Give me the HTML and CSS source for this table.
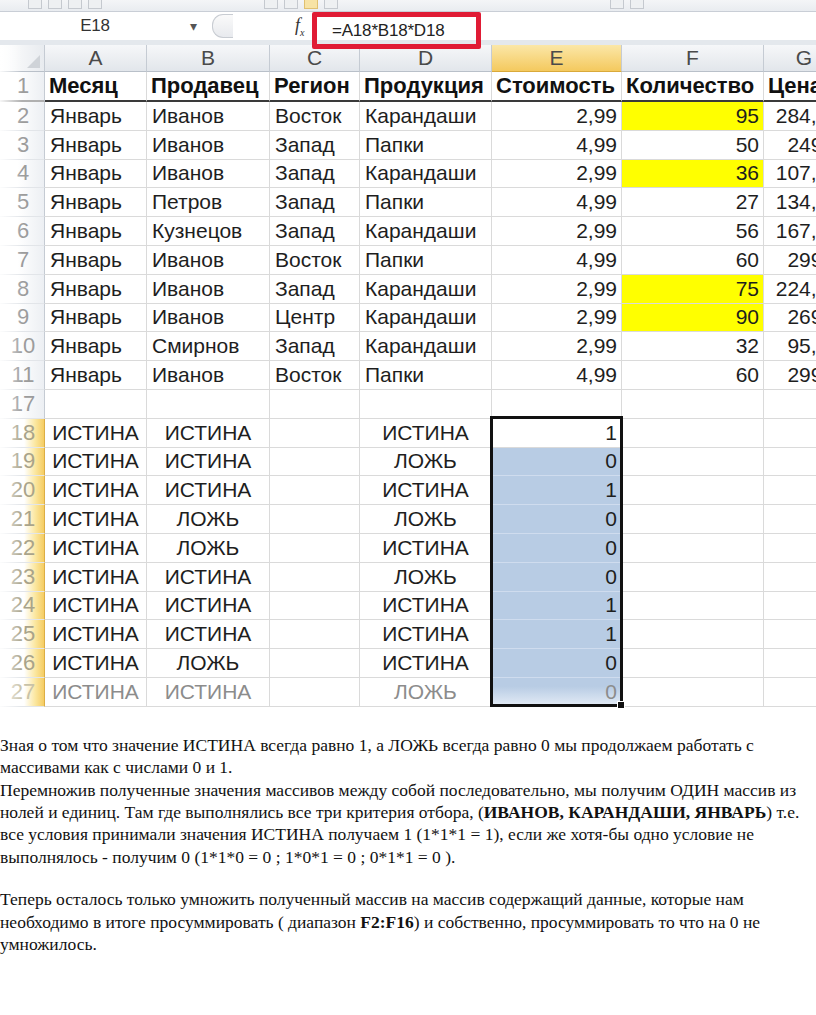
FILE: index.html
```html
<!DOCTYPE html>
<html lang="ru">
<head>
<meta charset="utf-8">
<title>Excel</title>
<link rel="stylesheet" href="styles.css">
</head>
<body>
<div class="page">
  <div class="toolbar">
    <span class="tb tb1"></span><span class="tb tb2"></span><span class="tb tb3"></span><span class="tb tb4"></span>
    <span class="tb-gap"></span>
    <span class="tb tb5"></span><span class="tb tb6"></span><span class="tb tb7 hl"></span><span class="tb tb8"></span>
    <span class="tb-gap2"></span>
    <span class="tb tb9"></span><span class="tb tb10"></span>
  </div>
  <div class="formula-bar">
    <div class="namebox">E18</div>
    <div class="dd">▾</div>
    <div class="pill"></div>
    <div class="fx">f<sub>x</sub></div>
    <div class="formula">=A18*B18*D18</div>
  </div>

  <div class="sheet">
    <div class="corner"><span class="tri"></span></div>
    <div class="ch">A</div><div class="ch">B</div><div class="ch">C</div><div class="ch">D</div><div class="ch act">E</div><div class="ch">F</div><div class="ch">G</div>

    <div class="rh h1">1</div><div class="c b h1">Месяц</div><div class="c b h1">Продавец</div><div class="c b h1">Регион</div><div class="c b h1">Продукция</div><div class="c b h1">Стоимость</div><div class="c b h1">Количество</div><div class="c b h1">Цена</div>

    <div class="rh">2</div><div class="c">Январь</div><div class="c">Иванов</div><div class="c">Восток</div><div class="c">Карандаши</div><div class="c r">2,99</div><div class="c r y">95</div><div class="c r">284,05</div>
    <div class="rh">3</div><div class="c">Январь</div><div class="c">Иванов</div><div class="c">Запад</div><div class="c">Папки</div><div class="c r">4,99</div><div class="c r">50</div><div class="c r">249,5</div>
    <div class="rh">4</div><div class="c">Январь</div><div class="c">Иванов</div><div class="c">Запад</div><div class="c">Карандаши</div><div class="c r">2,99</div><div class="c r y">36</div><div class="c r">107,64</div>
    <div class="rh">5</div><div class="c">Январь</div><div class="c">Петров</div><div class="c">Запад</div><div class="c">Папки</div><div class="c r">4,99</div><div class="c r">27</div><div class="c r">134,73</div>
    <div class="rh">6</div><div class="c">Январь</div><div class="c">Кузнецов</div><div class="c">Запад</div><div class="c">Карандаши</div><div class="c r">2,99</div><div class="c r">56</div><div class="c r">167,44</div>
    <div class="rh">7</div><div class="c">Январь</div><div class="c">Иванов</div><div class="c">Восток</div><div class="c">Папки</div><div class="c r">4,99</div><div class="c r">60</div><div class="c r">299,4</div>
    <div class="rh">8</div><div class="c">Январь</div><div class="c">Иванов</div><div class="c">Запад</div><div class="c">Карандаши</div><div class="c r">2,99</div><div class="c r y">75</div><div class="c r">224,25</div>
    <div class="rh">9</div><div class="c">Январь</div><div class="c">Иванов</div><div class="c">Центр</div><div class="c">Карандаши</div><div class="c r">2,99</div><div class="c r y">90</div><div class="c r">269,1</div>
    <div class="rh">10</div><div class="c">Январь</div><div class="c">Смирнов</div><div class="c">Запад</div><div class="c">Карандаши</div><div class="c r">2,99</div><div class="c r">32</div><div class="c r">95,68</div>
    <div class="rh">11</div><div class="c">Январь</div><div class="c">Иванов</div><div class="c">Восток</div><div class="c">Папки</div><div class="c r">4,99</div><div class="c r">60</div><div class="c r">299,4</div>
    <div class="rh">17</div><div class="c"></div><div class="c"></div><div class="c"></div><div class="c"></div><div class="c"></div><div class="c"></div><div class="c"></div>

    <div class="rh s">18</div><div class="c m">ИСТИНА</div><div class="c m">ИСТИНА</div><div class="c"></div><div class="c m">ИСТИНА</div><div class="c r e1">1</div><div class="c"></div><div class="c"></div>
    <div class="rh s">19</div><div class="c m">ИСТИНА</div><div class="c m">ИСТИНА</div><div class="c"></div><div class="c m">ЛОЖЬ</div><div class="c r bl">0</div><div class="c"></div><div class="c"></div>
    <div class="rh s">20</div><div class="c m">ИСТИНА</div><div class="c m">ИСТИНА</div><div class="c"></div><div class="c m">ИСТИНА</div><div class="c r bl">1</div><div class="c"></div><div class="c"></div>
    <div class="rh s">21</div><div class="c m">ИСТИНА</div><div class="c m">ЛОЖЬ</div><div class="c"></div><div class="c m">ЛОЖЬ</div><div class="c r bl">0</div><div class="c"></div><div class="c"></div>
    <div class="rh s">22</div><div class="c m">ИСТИНА</div><div class="c m">ЛОЖЬ</div><div class="c"></div><div class="c m">ИСТИНА</div><div class="c r bl">0</div><div class="c"></div><div class="c"></div>
    <div class="rh s">23</div><div class="c m">ИСТИНА</div><div class="c m">ИСТИНА</div><div class="c"></div><div class="c m">ЛОЖЬ</div><div class="c r bl">0</div><div class="c"></div><div class="c"></div>
    <div class="rh s">24</div><div class="c m">ИСТИНА</div><div class="c m">ИСТИНА</div><div class="c"></div><div class="c m">ИСТИНА</div><div class="c r bl">1</div><div class="c"></div><div class="c"></div>
    <div class="rh s">25</div><div class="c m">ИСТИНА</div><div class="c m">ИСТИНА</div><div class="c"></div><div class="c m">ИСТИНА</div><div class="c r bl">1</div><div class="c"></div><div class="c"></div>
    <div class="rh s">26</div><div class="c m">ИСТИНА</div><div class="c m">ЛОЖЬ</div><div class="c"></div><div class="c m">ИСТИНА</div><div class="c r bl">0</div><div class="c"></div><div class="c"></div>
    <div class="rh s fade">27</div><div class="c m fade">ИСТИНА</div><div class="c m fade">ИСТИНА</div><div class="c fade"></div><div class="c m fade">ЛОЖЬ</div><div class="c r bl last fade">0</div><div class="c fade"></div><div class="c fade"></div>

    <div class="selection"><span class="handle"></span></div>
    <div class="left-fade"></div>
  </div>

  <div class="text">
    <p>Зная о том что значение ИСТИНА всегда равно 1, а ЛОЖЬ всегда равно 0 мы продолжаем работать с<br>
    массивами как с числами 0 и 1.<br>
    Перемножив полученные значения массивов между собой последовательно, мы получим ОДИН массив из<br>
    нолей и единиц. Там где выполнялись все три критерия отбора, (<b>ИВАНОВ, КАРАНДАШИ, ЯНВАРЬ</b>) т.е.<br>
    все условия принимали значения ИСТИНА получаем 1 (1*1*1 = 1), если же хотя-бы одно условие не<br>
    выполнялось - получим 0 (1*1*0 = 0 ; 1*0*1 = 0 ; 0*1*1 = 0 ).</p>
    <p>Теперь осталось только умножить полученный массив на массив содержащий данные, которые нам<br>
    необходимо в итоге просуммировать ( диапазон <b>F2:F16</b>) и собственно, просуммировать то что на 0 не<br>
    умножилось.</p>
  </div>
</div>
</body>
</html>
```

FILE: styles.css
```css
html, body {
  margin: 0;
  padding: 0;
  background: #fff;
  overflow: hidden;
}
.page {
  width: 816px;
  height: 1015px;
  overflow: hidden;
  font-family: "Liberation Sans", Arial, sans-serif;
}

/* toolbar remnant */
.toolbar {
  height: 11px;
  background: linear-gradient(#f4f5f7, #e9ecf0);
  border-bottom: 1px solid #c9ced6;
  display: flex;
  align-items: flex-start;
  padding-left: 28px;
  gap: 6px;
  overflow: hidden;
}
.tb {
  width: 12px;
  height: 8px;
  border: 1px solid #c5c9cf;
  border-top: none;
  background: #eef0f2;
}
.tb.hl { background: #f7e3a5; border-color: #e0c070; }
.tb-gap { width: 150px; }
.tb-gap2 { width: 260px; }

.formula-bar {
  position: relative;
  height: 28px;
  background: #fff;
  border-bottom: 5px solid #e4e8ed;
  display: flex;
  align-items: center;
  font-size: 17px;
  color: #333;
}
.namebox {
  width: 190px;
  text-align: center;
  letter-spacing: -0.3px;
}
.dd {
  font-size: 14px;
  color: #555;
  width: 14px;
}
.pill {
  width: 20px;
  height: 22px;
  margin-left: 8px;
  border: 1px solid #c8ccd2;
  border-right: none;
  border-radius: 11px 0 0 11px;
  background: linear-gradient(#fafafa, #e8eaee);
}
.fx {
  margin-left: 62px;
  font-family: "Liberation Serif", serif;
  font-style: italic;
  font-size: 18px;
  color: #333;
  width: 16px;
}
.fx sub { font-size: 10px; }
.formula {
  position: absolute;
  left: 312px;
  top: 0;
  width: 144px;
  height: 27px;
  border: 5px solid #e01b35;
  border-radius: 2px;
  padding-left: 15px;
  line-height: 27px;
  box-sizing: content-box;
  color: #222;
  letter-spacing: -0.2px;
  z-index: 3;
}

/* sheet grid */
.sheet {
  position: relative;
  display: grid;
  grid-template-columns: 45px 102px 123px 90px 132px 130px 142px 81px;
  grid-template-rows: 27px 30px;
  grid-auto-rows: 28.8px;
  width: 845px;
  font-size: 21px;
  color: #1e1e1e;
}
.corner, .ch {
  background: linear-gradient(#f6f7f9, #e2e6eb);
  border-right: 1px solid #c5cbd3;
  border-bottom: 1px solid #b9c0c9;
  box-sizing: border-box;
}
.corner {
  position: relative;
  background: linear-gradient(90deg, #fff, #e8ebef);
}
.tri {
  position: absolute;
  right: 4px;
  bottom: 3px;
  width: 0;
  height: 0;
  border-left: 13px solid transparent;
  border-bottom: 13px solid #cfd3d8;
}
.ch {
  display: flex;
  align-items: center;
  justify-content: center;
  color: #4a4a4a;
  font-size: 21px;
}
.ch.act {
  background: linear-gradient(#fbe7a8, #f4c95e);
  border-bottom-color: #d9a93a;
}
.rh {
  display: flex;
  align-items: center;
  justify-content: center;
  padding-left: 2px;
  color: #9c9c9c;
  font-size: 22px;
  background: linear-gradient(90deg, #ffffff 40%, #eceff3 100%);
  border-right: 1px solid #c5cbd3;
  border-bottom: 1px solid #e2e5e9;
  box-sizing: border-box;
}
.rh.s {
  color: #a9a38a;
  background: linear-gradient(90deg, #ffffff 55%, #fbe7a0 80%, #f5cc62 100%);
  border-right-color: #dcae45;
}
.c {
  display: flex;
  align-items: center;
  padding: 0 4px 0 5px;
  border-right: 1px solid #dadada;
  border-bottom: 1px solid #dadada;
  box-sizing: border-box;
  white-space: nowrap;
  overflow: hidden;
}
.c.b { font-weight: bold; color: #111; font-size: 22px; padding-left: 4px; }
.h1 { border-bottom: 2px solid #3a3a3a; }
.rh.h1 { border-bottom: 2px solid #b0b0b0; }
.c.r { justify-content: flex-end; }
.c.m { justify-content: center; padding: 0; }
.c.y { background: #ffff00; }
.c.bl {
  background: #b8cce4;
  border-bottom-color: #cfdcee;
  border-right-color: #b8cce4;
}
.c.bl.last {
  background: linear-gradient(#b8cce4 30%, #e4ecf6 100%);
}
.fade { color: #8c8c8c; }
.rh.fade { color: #c8c2a8; }

.selection {
  position: absolute;
  left: 490px;
  top: 371px;
  width: 133px;
  height: 291px;
  border: 3px solid #111;
  box-sizing: border-box;
  pointer-events: none;
}
.handle {
  position: absolute;
  right: -5px;
  bottom: -5px;
  width: 6px;
  height: 6px;
  background: #111;
  border: 1px solid #fff;
}
.left-fade {
  position: absolute;
  left: 0;
  top: 0;
  bottom: 0;
  width: 22px;
  background: linear-gradient(90deg, rgba(255,255,255,0.9), rgba(255,255,255,0));
  pointer-events: none;
}

/* text */
.text {
  margin-top: 27px;
  font-family: "Liberation Serif", "Times New Roman", serif;
  font-size: 17.5px;
  line-height: 22.4px;
  color: #111;
  white-space: nowrap;
}
.text p {
  margin: 0 0 20px 0;
}
```
